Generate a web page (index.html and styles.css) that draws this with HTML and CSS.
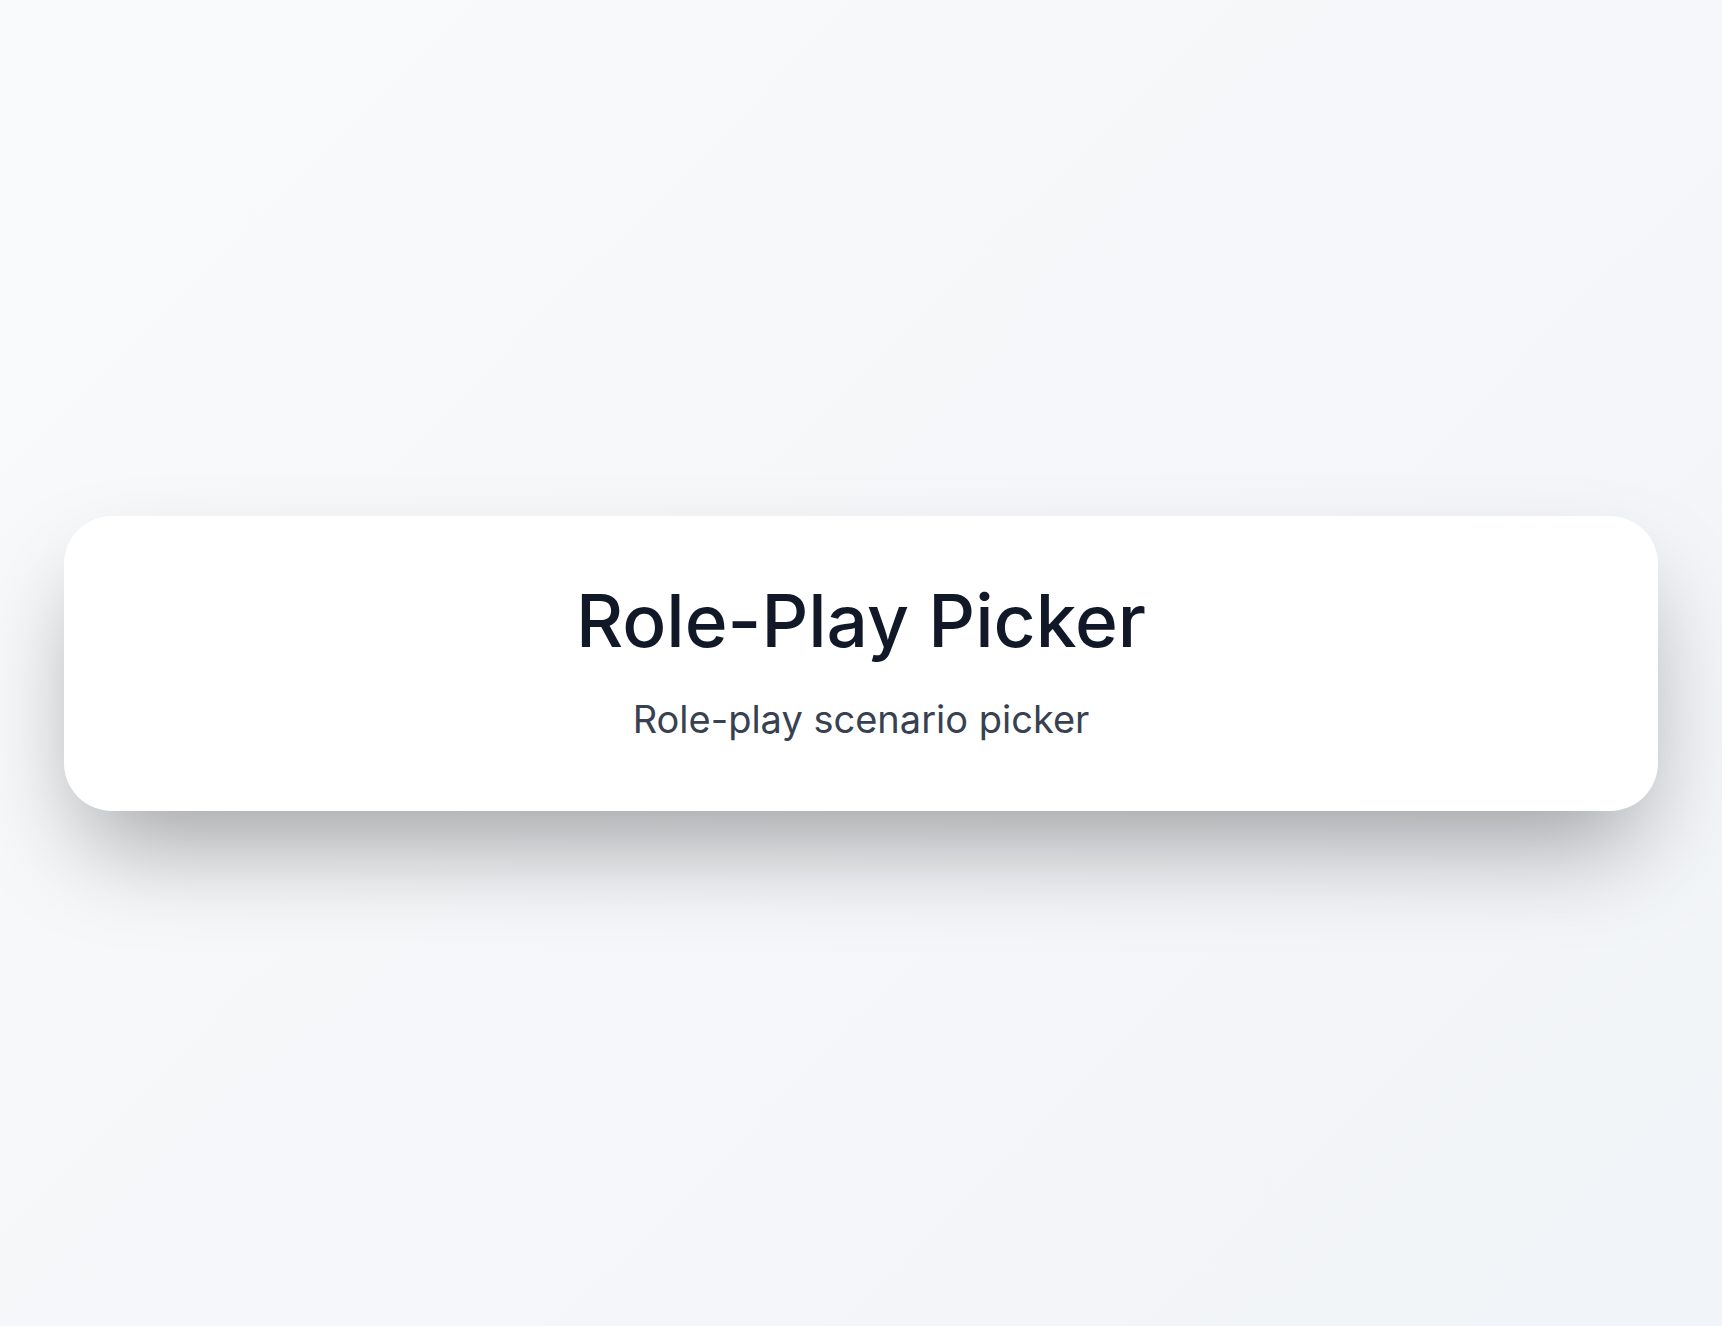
FILE: index.html
```html
<!DOCTYPE html>
<html lang="en">
<head>
  <meta charset="UTF-8" />
  <meta name="viewport" content="width=device-width, initial-scale=1.0" />
  <title>Role-Play Picker</title>
  <link rel="stylesheet" href="styles.css">
</head>
<body>
  <main class="page">
    <section class="hero-card">
      <h1 class="hero-title">Role-Play Picker</h1>
      <p class="hero-subtitle">Role-play scenario picker</p>
    </section>
  </main>
</body>
</html>
```

FILE: styles.css
```css
* { box-sizing: border-box; }
html, body { height: 100%; }
body {
  margin: 0;
  font-family: Inter, "Noto Sans", sans-serif;
  background: linear-gradient(135deg, #f9fafb 0%, #f1f4f8 100%);
}

/* Centers the card in the viewport */
.page {
  min-height: 100vh;
  display: flex;
  align-items: center;
  justify-content: center;
  padding: 0 64px;
}

.hero-card {
  width: 100%;
  background: #fff;
  border-radius: 48px;
  padding: 68px 48px;
  text-align: center;
  box-shadow: 0 50px 100px -20px rgba(0, 0, 0, 0.36);
}
.hero-title {
  margin: 0;
  font-size: 73px;
  line-height: 1;
  font-weight: 500;
  color: #111827;
}
.hero-subtitle {
  margin: 38px 0 0;
  font-size: 38px;
  line-height: 48px;
  font-weight: 400;
  color: #374151;
}
```
